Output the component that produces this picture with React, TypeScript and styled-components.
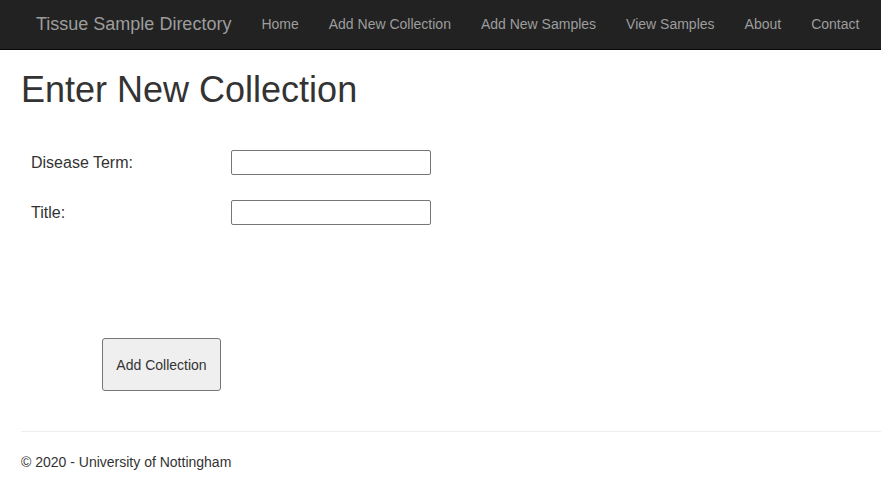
import React from 'react';
import styled, { createGlobalStyle } from 'styled-components';

const GlobalStyle = createGlobalStyle`
  * {
    box-sizing: border-box;
  }

  body {
    margin: 0;
    background: #fff;
    color: #333;
    font-family: "Liberation Sans", Arial, sans-serif;
    font-size: 14px;
    line-height: 1.42857;
  }
`;

const Navbar = styled.nav`
  display: flex;
  align-items: stretch;

  height: 50px;
  padding-left: 21px;

  background-color: #222;
  border-bottom: 1px solid #080808;
`;

const Brand = styled.a`
  padding: 14px 15px 15px;

  font-size: 18px;
  line-height: 20px;
  color: #9d9d9d;
  text-decoration: none;
`;

const NavList = styled.ul`
  display: flex;

  margin: 0;
  padding: 0;

  list-style: none;
`;

const NavLink = styled.a`
  display: block;

  padding: 14px 15px 15px;

  line-height: 20px;
  color: #9d9d9d;
  text-decoration: none;
`;

const Main = styled.main`
  padding-left: 21px;
`;

const Title = styled.h2`
  margin: 20px 0 10px;

  font-size: 36px;
  font-weight: 400;
  line-height: 1.1;
  color: #333;
`;

const Form = styled.form`
  padding: 18px 0 0 10px;
`;

const FieldRow = styled.div`
  display: grid;
  grid-template-columns: 200px 200px;
  align-items: center;

  height: 50px;
`;

const Label = styled.label`
  padding-top: 2px;

  font-size: 16px;
  color: #333;
`;

const TextInput = styled.input`
  width: 200px;
  height: 25px;
  padding: 1px 2px;

  border: 1px solid #767676;
  border-radius: 2px;

  font-family: inherit;
  font-size: 13px;
`;

const ButtonRow = styled.div`
  padding: 100px 0 40px 71px;
`;

const SubmitButton = styled.button`
  width: 119px;
  height: 53px;
  padding-top: 3px;

  background-color: #efefef;
  border: 1px solid #767676;
  border-radius: 3px;

  font-family: inherit;
  font-size: 14px;
  color: #333;
`;

const Rule = styled.hr`
  margin: 0 0 21px;

  border: 0;
  border-top: 1px solid #eee;
`;

const Footer = styled.footer`
  p {
    margin: 0 0 10px;
  }
`;

const links = [
  'Home',
  'Add New Collection',
  'Add New Samples',
  'View Samples',
  'About',
  'Contact',
];

function App() {
  return (
    <>
      <GlobalStyle />
      <Navbar>
        <Brand href="#">Tissue Sample Directory</Brand>
        <NavList>
          {links.map((link) => (
            <li key={link}>
              <NavLink href="#">{link}</NavLink>
            </li>
          ))}
        </NavList>
      </Navbar>
      <Main>
        <Title>Enter New Collection</Title>
        <Form onSubmit={(e) => e.preventDefault()}>
          <FieldRow>
            <Label htmlFor="disease">Disease Term:</Label>
            <TextInput id="disease" type="text" />
          </FieldRow>
          <FieldRow>
            <Label htmlFor="title">Title:</Label>
            <TextInput id="title" type="text" />
          </FieldRow>
          <ButtonRow>
            <SubmitButton type="submit">Add Collection</SubmitButton>
          </ButtonRow>
        </Form>
        <Rule />
        <Footer>
          <p>&copy; 2020 - University of Nottingham</p>
        </Footer>
      </Main>
    </>
  );
}

export default App;
